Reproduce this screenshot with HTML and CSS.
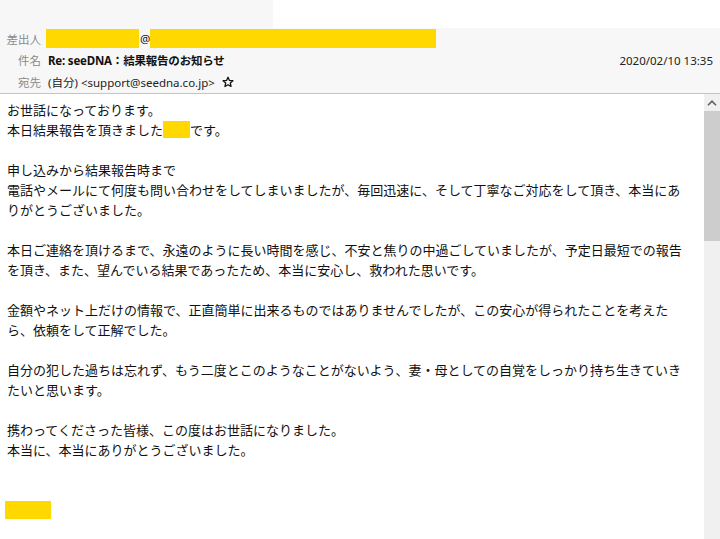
FILE: index.html
```html
<!DOCTYPE html>
<html lang="ja">
<head>
<meta charset="utf-8">
<link rel="stylesheet" href="styles.css">
</head>
<body>
<div class="topbar"><div class="tab"></div><div class="rest"></div></div>
<div class="header">
  <div class="row row-from">
    <span class="label">差出人</span>
    <span class="mask mask-name"></span>
    <span class="at">@</span>
    <span class="mask mask-domain"></span>
  </div>
  <div class="row row-subject">
    <span class="label">件名</span>
    <span class="subject">Re: seeDNA：結果報告のお知らせ</span>
    <span class="date">2020/02/10 13:35</span>
  </div>
  <div class="row row-to">
    <span class="label">宛先</span>
    <span class="to">(自分) &lt;support@seedna.co.jp&gt;</span>
    <svg class="star" width="12" height="12" viewBox="0 0 24 24"><path d="M12 2.5l2.9 6.3 6.9.7-5.2 4.6 1.5 6.8L12 17.4l-6.1 3.5 1.5-6.8-5.2-4.6 6.9-.7z" fill="none" stroke="#111" stroke-width="2.6" stroke-linejoin="round"/></svg>
  </div>
</div>
<div class="main">
  <div class="body">
    <p>お世話になっております。<br>本日結果報告を頂きました<span class="mask mask-inline"></span>です。</p>
    <p>申し込みから結果報告時まで<br>電話やメールにて何度も問い合わせをしてしまいましたが、毎回迅速に、そして丁寧なご対応をして頂き、本当にあ<br>りがとうございました。</p>
    <p>本日ご連絡を頂けるまで、永遠のように長い時間を感じ、不安と焦りの中過ごしていましたが、予定日最短での報告<br>を頂き、また、望んでいる結果であったため、本当に安心し、救われた思いです。</p>
    <p>金額やネット上だけの情報で、正直簡単に出来るものではありませんでしたが、この安心が得られたことを考えた<br>ら、依頼をして正解でした。</p>
    <p>自分の犯した過ちは忘れず、もう二度とこのようなことがないよう、妻・母としての自覚をしっかり持ち生きていき<br>たいと思います。</p>
    <p>携わってくださった皆様、この度はお世話になりました。<br>本当に、本当にありがとうございました。</p>
    <p class="spacer"></p>
    <div class="sign"><span class="mask mask-sign"></span></div>
  </div>
  <div class="scrollbar">
    <div class="arrow"><svg width="10" height="6" viewBox="0 0 10 6"><path d="M1 5.2L5 1.2 9 5.2" fill="none" stroke="#606060" stroke-width="1.6"/></svg></div>
    <div class="thumb"></div>
    <div class="track"></div>
  </div>
</div>
</body>
</html>
```
FILE: styles.css
```css
* { box-sizing: border-box; }
html, body { margin: 0; padding: 0; }
body {
  width: 720px;
  height: 539px;
  overflow: hidden;
  background: #fff;
  font-family: "Noto Sans", "Noto Sans CJK JP", sans-serif;
  color: #111;
}
.topbar { display: flex; height: 28px; }
.topbar .tab { width: 273px; background: #f7f7f7; }
.topbar .rest { flex: 1; background: #fff; }
.header {
  background: #f7f7f7;
  height: 66px;
  padding-top: 1px;
  border-bottom: 1px solid #c4c4c4;
  font-size: 11.5px;
}
.row { display: flex; align-items: center; }
.row-from { height: 19px; }
.row-subject { height: 22px; margin-top: 1px; }
.row-to { height: 22px; }
.label {
  width: 41px;
  text-align: right;
  color: #8a8a8a;
  flex: none;
}
.mask { display: inline-block; background: #ffd800; }
.mask-name { width: 93px; height: 19px; margin-left: 5px; }
.at { margin-left: 1px; width: 10px; }
.mask-domain { width: 286px; height: 19px; }
.subject { margin-left: 7px; font-weight: bold; color: #111; letter-spacing: -0.2px; }
.date { margin-left: auto; margin-right: 7px; color: #222; }
.to { margin-left: 7px; color: #222; }
.star { margin-left: 7px; }
.main { display: flex; height: 445px; }
.body {
  flex: 1;
  padding: 6px 0 0 7px;
  font-size: 13px;
  line-height: 20px;
  font-family: "Noto Sans CJK JP", sans-serif;
  color: #111;
  white-space: nowrap;
}
.body p { margin: 0 0 20px 0; }
.body p.spacer { height: 20px; margin: 0; }
.mask-inline { width: 27px; height: 17px; vertical-align: -3px; }
.sign { height: 20px; display: flex; align-items: center; margin-left: -2px; }
.mask-sign { width: 46px; height: 18px; }
.scrollbar {
  width: 16px;
  flex: none;
  display: flex;
  flex-direction: column;
  background: #f0f0f0;
}
.arrow { height: 17px; display: flex; align-items: center; justify-content: center; }
.thumb { height: 130px; background: #cdcdcd; }
.track { flex: 1; }
```
